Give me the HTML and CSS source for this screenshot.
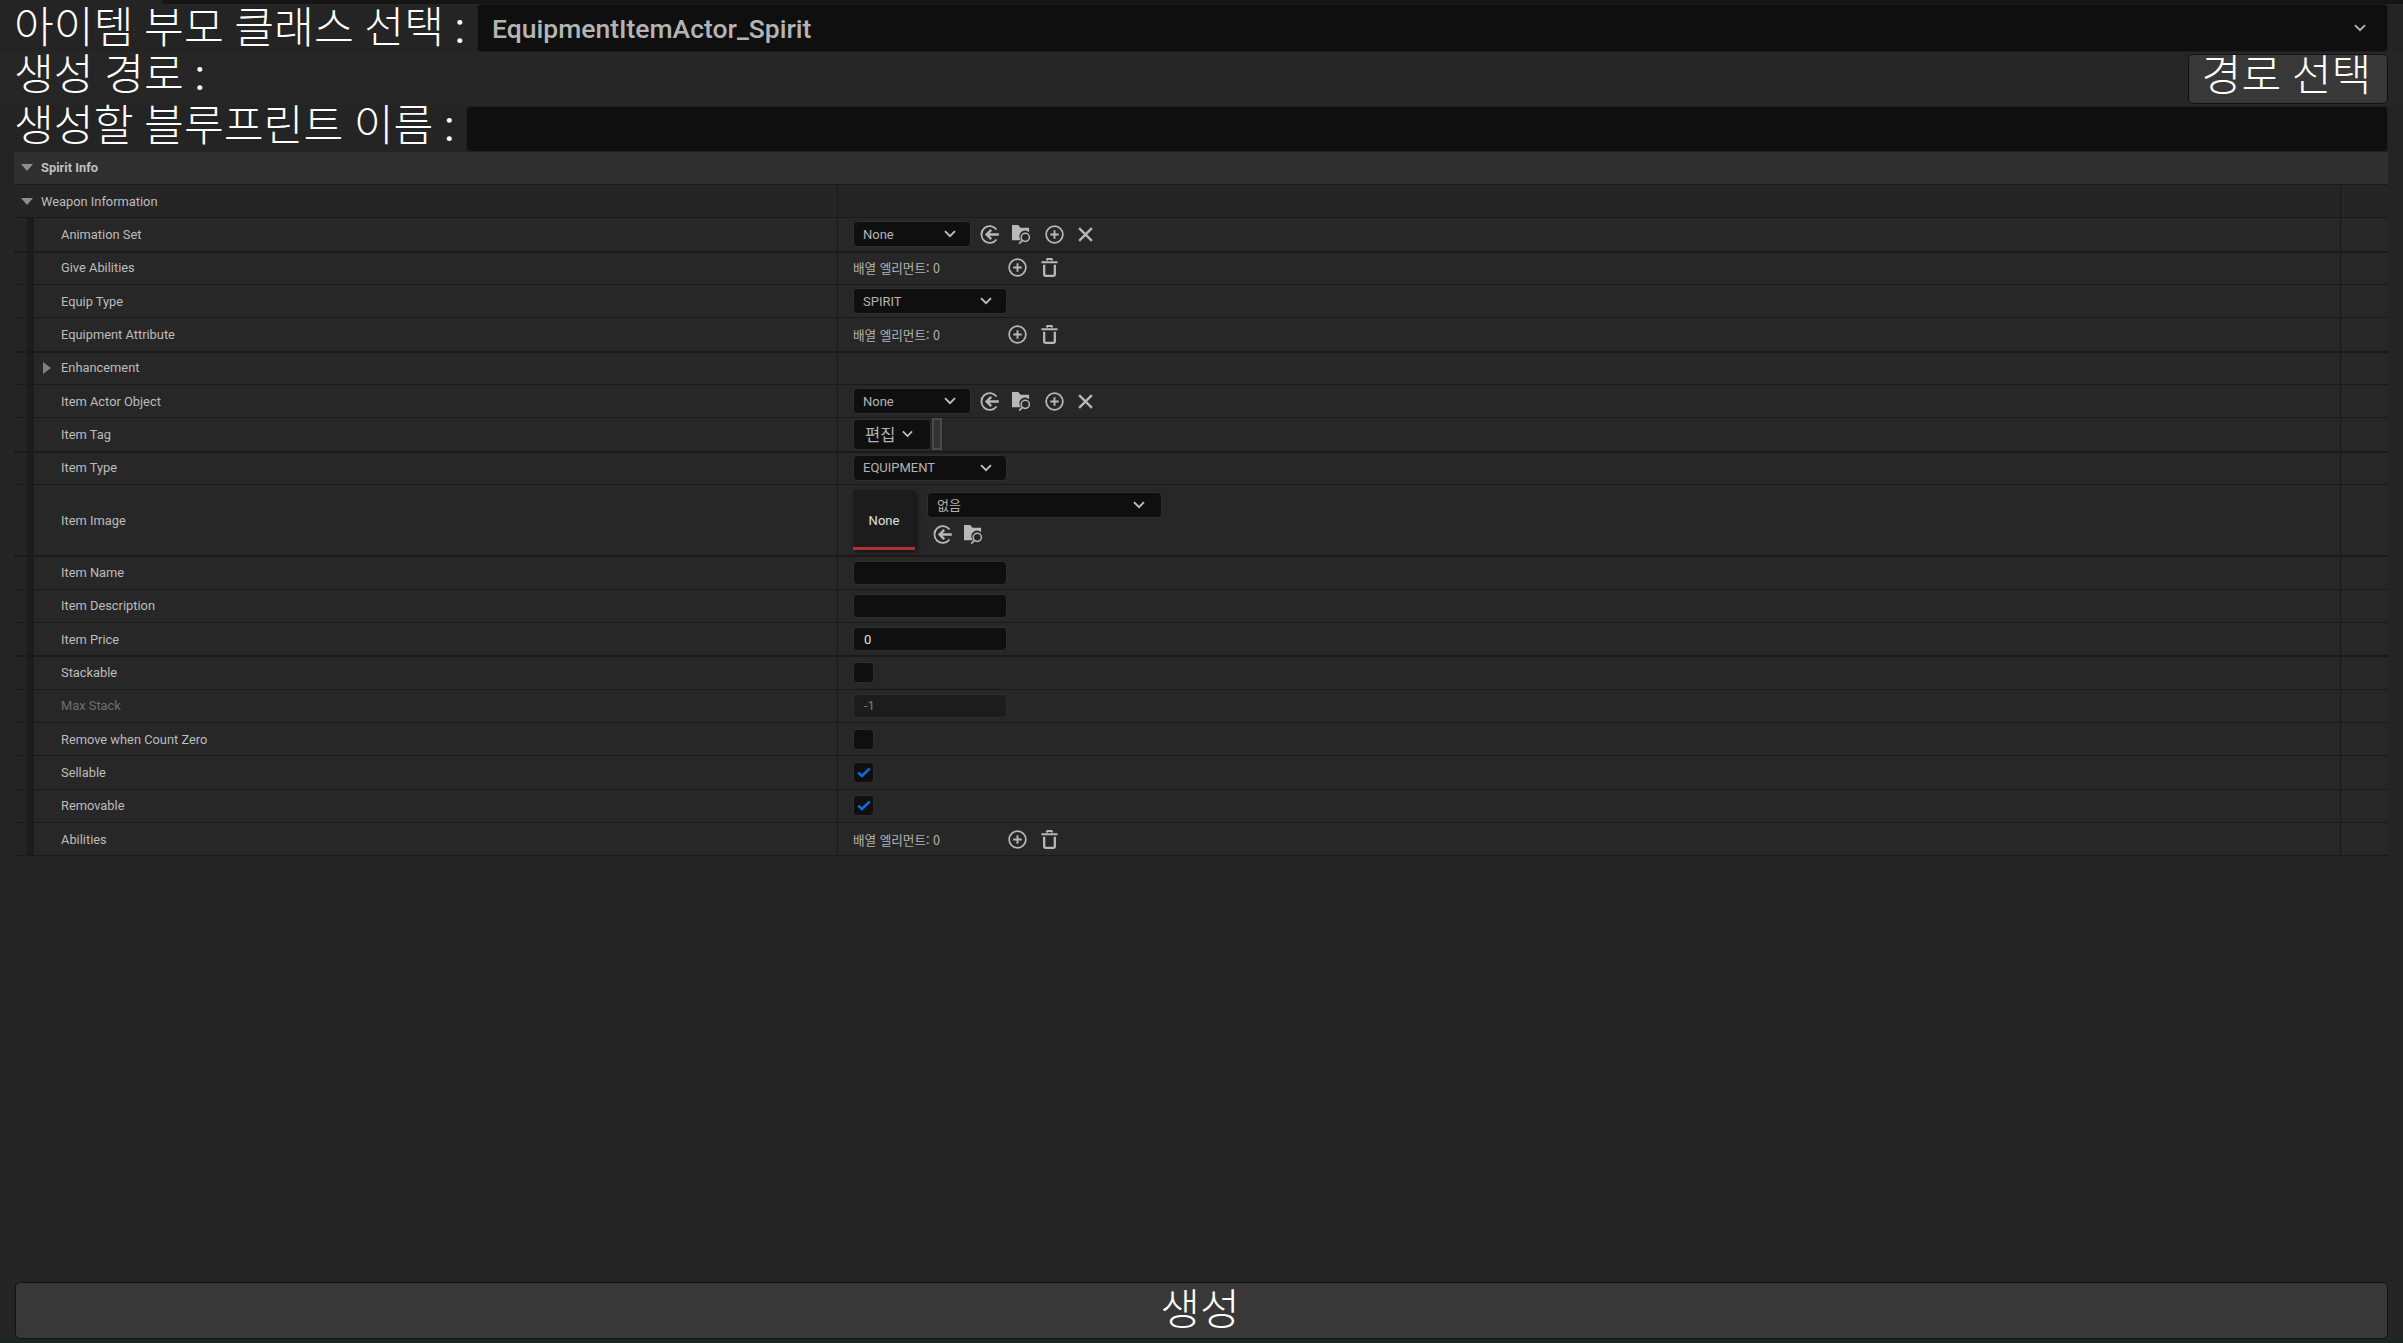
FILE: index.html
```html
<!DOCTYPE html>
<html lang="ko">
<head>
    <meta charset="UTF-8">
    <title>Spirit Item Creator</title>
    <link rel="stylesheet" href="styles.css">
</head>
<body>
    <svg class="sprite" width="0" height="0">
        <symbol id="i-chevron" viewBox="0 0 12 8"><path d="M1 1.2 6 6.2 11 1.2" fill="none" stroke="currentColor" stroke-width="1.9"/></symbol>
        <symbol id="i-back" viewBox="0 0 20 20"><path d="M17.4 4.8A8.8 8.8 0 1 0 17.4 15.2" fill="none" stroke="currentColor" stroke-width="1.9"/><path d="M19.8 10H7M11.8 5.2 7 10l4.8 4.8" fill="none" stroke="currentColor" stroke-width="2.6"/></symbol>
        <symbol id="i-browse" viewBox="0 0 20 20"><path d="M0 0h6.5l2.5 3h9v4.6a6 6 0 0 0-8.6 8.4H0z" fill="currentColor"/><circle cx="14" cy="13" r="4.3" fill="none" stroke="currentColor" stroke-width="1.6"/><path d="M11 16.2 7.6 19.6" fill="none" stroke="currentColor" stroke-width="1.7"/></symbol>
        <symbol id="i-plus" viewBox="0 0 20 20"><circle cx="10" cy="10" r="8.8" fill="none" stroke="currentColor" stroke-width="1.8"/><path d="M10 5.5v9M5.5 10h9" fill="none" stroke="currentColor" stroke-width="2"/></symbol>
        <symbol id="i-close" viewBox="0 0 16 16"><path d="M1.2 1.2 14.8 14.8M14.8 1.2 1.2 14.8" fill="none" stroke="currentColor" stroke-width="2.5"/></symbol>
        <symbol id="i-trash" viewBox="0 0 18 20"><path d="M0.5 4.5H17.5M6 2.6 6.8 1H11.2L12 2.6" fill="none" stroke="currentColor" stroke-width="2"/><path d="M3.4 7V17.2Q3.4 18.8 5 18.8H13Q14.6 18.8 14.6 17.2V7" fill="none" stroke="currentColor" stroke-width="2.4"/></symbol>
        <symbol id="i-check" viewBox="0 0 14 11"><path d="M1.2 5.6 5 9 12.8 1.4" fill="none" stroke="currentColor" stroke-width="2.6"/></symbol>
    </svg>

    <div class="tabstrip"><div class="tab"></div></div>

    <div class="line line-class">
        <span class="title">아이템 부모 클래스 선택 <b class="colon">:</b></span>
        <div class="bigcombo">
            <span>EquipmentItemActor_Spirit</span>
            <svg class="big-chevron"><use href="#i-chevron"/></svg>
        </div>
    </div>
    <div class="line line-path">
        <span class="title">생성 경로 <b class="colon">:</b></span>
        <button class="path-btn">경로 선택</button>
    </div>
    <div class="line line-name">
        <span class="title">생성할 블루프린트 이름 <b class="colon">:</b></span>
        <div class="bigfield"></div>
    </div>

    <div class="panel">
        <div class="section">
            <span class="tri-down"></span>
            <span>Spirit Info</span>
        </div>

        <div class="row group">
            <div class="name"><span class="tri-down"></span><span class="group-label">Weapon Information</span></div>
            <div class="value"></div>
            <div class="extra"></div>
        </div>

        <div class="row thick">
            <div class="name"><span class="label">Animation Set</span></div>
            <div class="value">
                <div class="combo combo-asset"><span>None</span><svg class="chevron"><use href="#i-chevron"/></svg></div>
                <div class="tools">
                    <svg class="icon"><use href="#i-back"/></svg>
                    <svg class="icon"><use href="#i-browse"/></svg>
                    <svg class="icon"><use href="#i-plus"/></svg>
                    <svg class="icon icon-x"><use href="#i-close"/></svg>
                </div>
            </div>
            <div class="extra"></div>
        </div>

        <div class="row">
            <div class="name"><span class="label">Give Abilities</span></div>
            <div class="value">
                <span class="count">배열 엘리먼트: 0</span>
                <svg class="icon"><use href="#i-plus"/></svg>
                <svg class="icon"><use href="#i-trash"/></svg>
            </div>
            <div class="extra"></div>
        </div>

        <div class="row">
            <div class="name"><span class="label">Equip Type</span></div>
            <div class="value">
                <div class="combo combo-enum"><span>SPIRIT</span><svg class="chevron"><use href="#i-chevron"/></svg></div>
            </div>
            <div class="extra"></div>
        </div>

        <div class="row thick">
            <div class="name"><span class="label">Equipment Attribute</span></div>
            <div class="value">
                <span class="count">배열 엘리먼트: 0</span>
                <svg class="icon"><use href="#i-plus"/></svg>
                <svg class="icon"><use href="#i-trash"/></svg>
            </div>
            <div class="extra"></div>
        </div>

        <div class="row">
            <div class="name"><span class="tri-right"></span><span class="label">Enhancement</span></div>
            <div class="value"></div>
            <div class="extra"></div>
        </div>

        <div class="row">
            <div class="name"><span class="label">Item Actor Object</span></div>
            <div class="value">
                <div class="combo combo-asset"><span>None</span><svg class="chevron"><use href="#i-chevron"/></svg></div>
                <div class="tools">
                    <svg class="icon"><use href="#i-back"/></svg>
                    <svg class="icon"><use href="#i-browse"/></svg>
                    <svg class="icon"><use href="#i-plus"/></svg>
                    <svg class="icon icon-x"><use href="#i-close"/></svg>
                </div>
            </div>
            <div class="extra"></div>
        </div>

        <div class="row thick">
            <div class="name"><span class="label">Item Tag</span></div>
            <div class="value value-tag">
                <div class="combo combo-tag"><span>편집</span><svg class="chevron"><use href="#i-chevron"/></svg></div>
                <div class="tag-slot"></div>
            </div>
            <div class="extra"></div>
        </div>

        <div class="row">
            <div class="name"><span class="label">Item Type</span></div>
            <div class="value">
                <div class="combo combo-enum"><span>EQUIPMENT</span><svg class="chevron"><use href="#i-chevron"/></svg></div>
            </div>
            <div class="extra"></div>
        </div>

        <div class="row row-image thick">
            <div class="name"><span class="label">Item Image</span></div>
            <div class="value value-image">
                <div class="thumb">None</div>
                <div class="image-side">
                    <div class="combo combo-image"><span>없음</span><svg class="chevron"><use href="#i-chevron"/></svg></div>
                    <div class="image-tools">
                        <svg class="icon"><use href="#i-back"/></svg>
                        <svg class="icon"><use href="#i-browse"/></svg>
                    </div>
                </div>
            </div>
            <div class="extra"></div>
        </div>

        <div class="row">
            <div class="name"><span class="label">Item Name</span></div>
            <div class="value"><div class="field"></div></div>
            <div class="extra"></div>
        </div>

        <div class="row">
            <div class="name"><span class="label">Item Description</span></div>
            <div class="value"><div class="field"></div></div>
            <div class="extra"></div>
        </div>

        <div class="row thick">
            <div class="name"><span class="label">Item Price</span></div>
            <div class="value"><div class="field">0</div></div>
            <div class="extra"></div>
        </div>

        <div class="row">
            <div class="name"><span class="label">Stackable</span></div>
            <div class="value"><div class="checkbox"></div></div>
            <div class="extra"></div>
        </div>

        <div class="row">
            <div class="name"><span class="label label-off">Max Stack</span></div>
            <div class="value"><div class="field field-off">-1</div></div>
            <div class="extra"></div>
        </div>

        <div class="row">
            <div class="name"><span class="label">Remove when Count Zero</span></div>
            <div class="value"><div class="checkbox"></div></div>
            <div class="extra"></div>
        </div>

        <div class="row">
            <div class="name"><span class="label">Sellable</span></div>
            <div class="value"><div class="checkbox"><svg class="check"><use href="#i-check"/></svg></div></div>
            <div class="extra"></div>
        </div>

        <div class="row">
            <div class="name"><span class="label">Removable</span></div>
            <div class="value"><div class="checkbox"><svg class="check"><use href="#i-check"/></svg></div></div>
            <div class="extra"></div>
        </div>

        <div class="row">
            <div class="name"><span class="label">Abilities</span></div>
            <div class="value">
                <span class="count">배열 엘리먼트: 0</span>
                <svg class="icon"><use href="#i-plus"/></svg>
                <svg class="icon"><use href="#i-trash"/></svg>
            </div>
            <div class="extra"></div>
        </div>
    </div>

    <button class="create-btn">생성</button>
    <div class="statusbar"></div>
</body>
</html>
```

FILE: styles.css
```css
* {
    box-sizing: border-box;
}

html, body {
    height: 100%;
}

body {
    margin: 0;
    padding: 0;
    display: flex;
    flex-direction: column;
    background-color: #242424;
    color: #c0c0c0;
    font-family: Roboto, "Noto Sans CJK KR", sans-serif;
    font-size: 13px;
    overflow: hidden;
}

.sprite {
    position: absolute;
}

.tabstrip {
    height: 4px;
    background: #151515;
}

.tab {
    width: 162px;
    height: 4px;
    background: #242424;
}

.line {
    display: flex;
    align-items: center;
    padding: 0 15px 0 14px;
}

.line-class {
    height: 48px;
    gap: 12px;
}

.line-class .title {
    margin-top: 2px;
}

.line-path {
    height: 53px;
    justify-content: space-between;
    background: #262626;
}

.line-path .title {
    margin-bottom: 5px;
}

.line-name {
    height: 47px;
    gap: 12px;
}

.line-name .title {
    margin-bottom: 3px;
}

.title {
    font-size: 43.3px;
    font-weight: 300;
    line-height: 1;
    color: #fff;
    white-space: nowrap;
}

.colon {
    font-weight: 400;
}

.bigcombo {
    flex: 1;
    height: 48px;
    display: flex;
    align-items: center;
    justify-content: space-between;
    padding: 0 21px 0 14px;
    background: #0f0f0f;
    border: 1px solid #1c1c1c;
    border-radius: 4px;
    font-size: 26.5px;
    font-weight: 500;
    color: #b4b4b4;
}

.big-chevron {
    width: 12px;
    height: 8px;
}

.bigfield {
    flex: 1;
    height: 46px;
    background: #0f0f0f;
    border: 1px solid #1f1f1f;
    border-radius: 4px;
}

.path-btn {
    width: 200px;
    height: 50px;
    padding: 0 3px 5px 0;
    background: #383838;
    border: 1px solid #111;
    border-radius: 5px;
    font-family: Roboto, "Noto Sans CJK KR", sans-serif;
    font-size: 43.3px;
    font-weight: 300;
    line-height: 1;
    color: #fff;
}

.panel {
    flex: 1;
    margin: 0 15px 0 14px;
}

.section {
    height: 33px;
    display: flex;
    align-items: center;
    background: #2f2f2f;
    border-bottom: 1px solid #1a1a1a;
    padding: 0 0 2px 7px;
    font-size: 12.85px;
    font-weight: 700;
    color: #c0c0c0;
}

.row {
    height: 33.33px;
    display: flex;
    border-bottom: 1px solid #1a1a1a;
}

.row.thick {
    position: relative;
    z-index: 1;
    box-shadow: 0 1px 0 #1a1a1a;
}

.row-image {
    height: 71.5px;
}

.name {
    width: 823px;
    display: flex;
    align-items: center;
    padding-left: 47px;
    position: relative;
    background: linear-gradient(to right, #242424 13px, #1c1c1c 13px, #1c1c1c 20px, #272727 20px);
}

.group .name {
    padding-left: 7px;
    background: #252525;
}

.group .value, .group .extra {
    background: #252525;
}

.value {
    width: 1503px;
    display: flex;
    align-items: center;
    padding-left: 15px;
    background: #272727;
    border-left: 1px solid #1a1a1a;
}

.extra {
    flex: 1;
    background: #272727;
    border-left: 1px solid #1a1a1a;
}

.tri-down {
    width: 0;
    height: 0;
    margin-right: 8px;
    border-left: 6px solid transparent;
    border-right: 6px solid transparent;
    border-top: 7px solid #8f8f8f;
}

.tri-right {
    position: absolute;
    left: 29px;
    width: 0;
    height: 0;
    border-top: 6px solid transparent;
    border-bottom: 6px solid transparent;
    border-left: 8px solid #808080;
}

.label, .group-label {
    font-size: 12.85px;
    color: #bdbdbd;
    white-space: nowrap;
}

.label-off {
    color: #6f6f6f;
}

.combo {
    height: 26px;
    display: flex;
    align-items: center;
    justify-content: space-between;
    padding: 0 14px 0 9px;
    background: #0f0f0f;
    border: 1px solid #2e2e2e;
    border-radius: 4px;
    color: #b4b4b4;
    font-size: 13px;
}

.chevron {
    width: 12px;
    height: 8px;
    color: #c0c0c0;
}

.combo-asset {
    width: 118px;
}

.combo-enum {
    width: 154px;
}

.combo-tag {
    width: 78px;
    height: 31px;
    padding: 0 17px 0 11px;
    font-size: 16.5px;
}

.combo-tag .chevron {
    width: 11px;
}

.combo-image {
    width: 235px;
    padding-right: 16px;
}

.value-tag {
    gap: 1px;
}

.tag-slot {
    width: 10px;
    height: 32px;
    background: #333;
    border: 2px solid #4a4a4a;
}

.tools {
    display: flex;
    align-items: center;
    gap: 13.5px;
    margin-left: 8.5px;
}

.icon {
    width: 19px;
    height: 19px;
    color: #b8b8b8;
}

.icon-x {
    width: 15px;
    height: 15px;
    margin-left: 1px;
}

.count {
    width: 155px;
    font-family: "Noto Sans CJK KR", sans-serif;
    font-size: 12.6px;
    color: #b4b4b4;
    white-space: nowrap;
}

.count + .icon {
    margin-right: 13px;
}

.value-image {
    gap: 12px;
}

.thumb {
    width: 62px;
    height: 60px;
    display: flex;
    align-items: center;
    justify-content: center;
    padding-top: 3px;
    background: #1c1c1c;
    border-bottom: 3px solid #b03038;
    border-radius: 3px 3px 0 0;
    box-shadow: 2px 2px 4px rgba(0, 0, 0, 0.5);
    color: #e0e0e0;
    font-size: 13px;
}

.image-side {
    display: flex;
    flex-direction: column;
    gap: 7px;
    margin-bottom: 5px;
}

.image-tools {
    display: flex;
    align-items: center;
    gap: 12px;
    padding-left: 6px;
}

.field {
    width: 154px;
    height: 24px;
    display: flex;
    align-items: center;
    padding-left: 10px;
    background: #0f0f0f;
    border: 1px solid #2e2e2e;
    border-radius: 4px;
    color: #e0e0e0;
    font-size: 13px;
}

.field-off {
    background: #1c1c1c;
    color: #777;
}

.checkbox {
    width: 21px;
    height: 21px;
    display: flex;
    align-items: center;
    justify-content: center;
    background: #0f0f0f;
    border: 1px solid #2e2e2e;
    border-radius: 4px;
}

.check {
    width: 14px;
    height: 11px;
    color: #0a6fdc;
}

.create-btn {
    height: 57px;
    margin: 0 15px 0 15px;
    padding: 1px 3px 0 0;
    background: #383838;
    border: 1px solid #111;
    border-radius: 5px;
    font-family: Roboto, "Noto Sans CJK KR", sans-serif;
    font-size: 43.3px;
    font-weight: 300;
    line-height: 1;
    color: #fff;
}

.statusbar {
    height: 4px;
    background: #1a2624;
}
```
